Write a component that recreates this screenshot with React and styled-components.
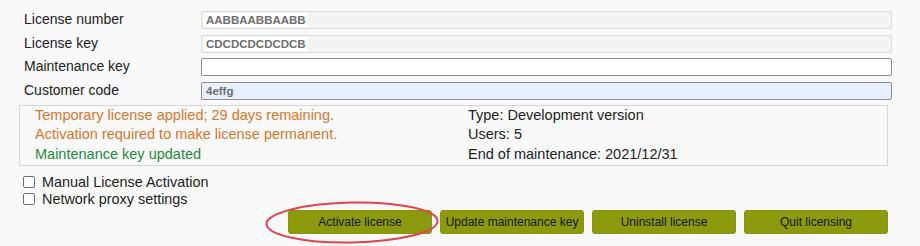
import React from "react";
import styled, { createGlobalStyle } from "styled-components";

const Global = createGlobalStyle`
  html, body { margin: 0; padding: 0; background: #f9f9f9; }
  body { font-family: "Liberation Sans", Arial, sans-serif; color: #222; }
`;

const Page = styled.div`
  width: 920px;
  height: 246px;
  box-sizing: border-box;
  padding: 11px 32px 0 19px;
  background: #f9f9f9;
`;

const Form = styled.div`
  display: grid;
  grid-template-columns: 182px 1fr;
  row-gap: 5.6px;
  margin-right: -4px;
`;

const Label = styled.label`
  padding-left: 5px;
  font-size: 14px;
  line-height: 16px;
  color: #222;
`;

const Field = styled.div`
  height: 18px;
  box-sizing: border-box;
  border-radius: 2px;
  display: flex;
  align-items: center;
  padding: 0 2px;
  border: 1px solid ${p => (p.$variant === "readonly" ? "#dcdcdc" : "#8e8e8e")};
  background: ${p =>
    p.$variant === "readonly" ? "#f4f4f4" : p.$variant === "autofill" ? "#e8f0fe" : "#ffffff"};
`;

const Value = styled.span`
  font-size: 11.5px;
  font-weight: bold;
  color: #6e6e6e;
  line-height: 14px;
  padding: 0 2px;
  background: ${p => (p.$highlight ? "#ffffff" : "transparent")};
`;

const Status = styled.div`
  margin-top: 5px;
  border: 1px solid #d6d6d6;
  display: grid;
  grid-template-columns: 433px 1fr;
  padding: 0 15px;
  font-size: 14.5px;
  line-height: 19.7px;
`;

const Col = styled.div`
  display: flex;
  flex-direction: column;
`;

const Msg = styled.div`
  color: ${p => (p.$tone === "warn" ? "#d6782b" : p.$tone === "ok" ? "#1f8a3a" : "#222")};
`;

const Checks = styled.div`
  margin-top: 7px;
  display: flex;
  flex-direction: column;
`;

const CheckRow = styled.label`
  display: flex;
  align-items: center;
  height: 17.5px;
  font-size: 14.4px;
  color: #222;
`;

const Box = styled.input`
  appearance: none;
  width: 12px;
  height: 12px;
  margin: 0 7px 0 4px;
  box-sizing: border-box;
  border: 1px solid #6f6f6f;
  border-radius: 2px;
  background: #fff;
`;

const Buttons = styled.div`
  margin-top: 2.5px;
  display: flex;
  justify-content: flex-end;
  gap: 8px;
`;

const BtnWrap = styled.div`
  position: relative;
`;

const Button = styled.button`
  width: 144px;
  height: 24px;
  border: 1px solid #879609;
  border-radius: 3px;
  background: #8b9a0d;
  color: #161616;
  font-family: "Liberation Sans", Arial, sans-serif;
  font-size: 12px;
  padding: 0;
  cursor: pointer;
`;

const Ring = styled.svg`
  position: absolute;
  left: -23px;
  top: -9px;
  width: 174px;
  height: 43px;
  overflow: visible;
  pointer-events: none;
`;

export default function App() {
  return (
    <>
      <Global />
      <Page>
        <Form>
          <Label>License number</Label>
          <Field $variant="readonly">
            <Value $highlight>AABBAABBAABB</Value>
          </Field>
          <Label>License key</Label>
          <Field $variant="readonly">
            <Value $highlight>CDCDCDCDCDCB</Value>
          </Field>
          <Label>Maintenance key</Label>
          <Field $variant="edit" />
          <Label>Customer code</Label>
          <Field $variant="autofill">
            <Value>4effg</Value>
          </Field>
        </Form>
        <Status>
          <Col>
            <Msg $tone="warn">Temporary license applied; 29 days remaining.</Msg>
            <Msg $tone="warn">Activation required to make license permanent.</Msg>
            <Msg $tone="ok">Maintenance key updated</Msg>
          </Col>
          <Col>
            <Msg>Type: Development version</Msg>
            <Msg>Users: 5</Msg>
            <Msg>End of maintenance: 2021/12/31</Msg>
          </Col>
        </Status>
        <Checks>
          <CheckRow>
            <Box type="checkbox" />
            Manual License Activation
          </CheckRow>
          <CheckRow>
            <Box type="checkbox" />
            Network proxy settings
          </CheckRow>
        </Checks>
        <Buttons>
          <BtnWrap>
            <Button>Activate license</Button>
            <Ring viewBox="0 0 174 43">
              <ellipse
                cx="87"
                cy="21.5"
                rx="85.5"
                ry="20"
                fill="none"
                stroke="#e2434f"
                strokeWidth="2"
                transform="rotate(-1 87 21.5)"
              />
            </Ring>
          </BtnWrap>
          <Button>Update maintenance key</Button>
          <Button>Uninstall license</Button>
          <Button>Quit licensing</Button>
        </Buttons>
      </Page>
    </>
  );
}
